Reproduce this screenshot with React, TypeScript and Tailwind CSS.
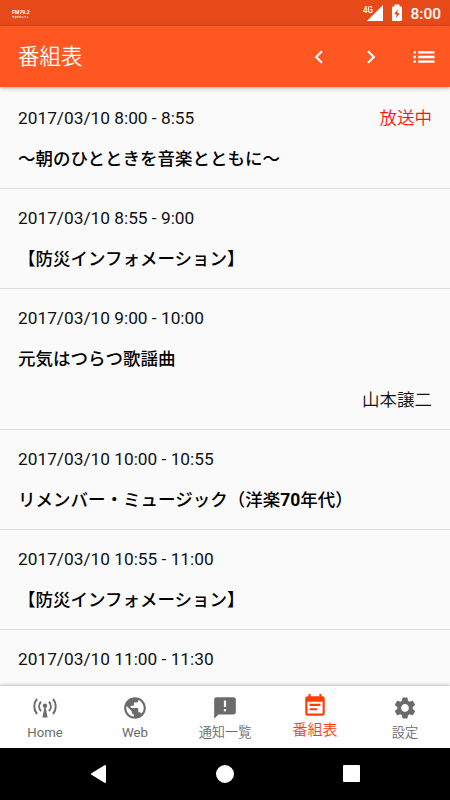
import { MdAnnouncement, MdChevronLeft, MdChevronRight, MdEventNote, MdList, MdPublic, MdSettings } from "react-icons/md";

const PROGRAMS = [
  { time: "2017/03/10 8:00 - 8:55", title: "～朝のひとときを音楽とともに～", onAir: true },
  { time: "2017/03/10 8:55 - 9:00", title: "【防災インフォメーション】" },
  { time: "2017/03/10 9:00 - 10:00", title: "元気はつらつ歌謡曲", host: "山本譲二" },
  { time: "2017/03/10 10:00 - 10:55", title: <>リメンバー・ミュージック（洋楽<b>70</b>年代）</> },
  { time: "2017/03/10 10:55 - 11:00", title: "【防災インフォメーション】" },
  { time: "2017/03/10 11:00 - 11:30", title: "" },
];

function AntennaIcon() {
  return (
    <svg width="26" height="26" viewBox="0 0 26 26" fill="none" stroke="currentColor" strokeWidth="2">
      <path d="M5 3.8C1.4 7.9 1.4 14.9 5 19M21 3.8c3.6 4.1 3.6 11.1 0 15.2" />
      <path d="M9 6.8c-2.5 2.7-2.5 6.6 0 9.3M17 6.8c2.5 2.7 2.5 6.6 0 9.3" />
      <circle cx="13" cy="10.8" r="2.2" fill="currentColor" stroke="none" />
      <path d="M12.4 12.5h1.2L15.6 22.5h-5.2z" fill="currentColor" stroke="none" />
    </svg>
  );
}

const TABS = [
  { label: "Home", icon: <AntennaIcon /> },
  { label: "Web", icon: <MdPublic size={26} /> },
  { label: "通知一覧", icon: <MdAnnouncement size={26} />, cjk: true },
  { label: "番組表", icon: <MdEventNote size={26} />, cjk: true, active: true },
  { label: "設定", icon: <MdSettings size={26} />, cjk: true },
];

function StatusBar() {
  return (
    <div className="flex h-[26px] shrink-0 items-center justify-between bg-[#e64a19] pl-2.5 pr-[9px] text-white">
      <svg width="40" height="26" viewBox="0 0 40 26" fill="#fff" fontWeight="700">
        <text x="2" y="14.3" fontSize="5.2">FM79.2</text>
        <text x="2" y="17.6" fontSize="2.4">やまがたシティ</text>
      </svg>
      <div className="flex items-center">
        <svg width="20" height="18" viewBox="0 0 20 18" fill="#fff">
          <text x="0" y="8.5" fontSize="9" fontWeight="500" textLength="10" lengthAdjust="spacingAndGlyphs">4G</text>
          <path d="M20 1v16H4z" />
        </svg>
        <svg className="ml-[9px]" width="10" height="18" viewBox="0 0 10 18">
          <path d="M2.5.5h5v2H9a1 1 0 0 1 1 1V16a1 1 0 0 1-1 1H1a1 1 0 0 1-1-1V3.5a1 1 0 0 1 1-1h1.5z" fill="#fff" />
          <path d="M6.2 5 2.3 9.8l2.5 1L3.6 14.5l4.1-5-2.6-1z" fill="#e64a19" />
        </svg>
        <span className="ml-2 pt-[3px] text-[15.5px] font-medium leading-none">8:00</span>
      </div>
    </div>
  );
}

export default function App() {
  return (
    <div className="flex h-[800px] w-[450px] flex-col overflow-hidden bg-[#fafafa] font-['Roboto','Noto_Sans_CJK_JP',sans-serif]">
      <StatusBar />
      <header className="z-10 flex h-[61px] shrink-0 items-center bg-[#ff5722] pl-[18px] pr-3 text-white shadow-[0_1px_4px_rgba(0,0,0,0.35)]">
        <h1 className="flex-1 pt-px text-[21.5px] font-[350] leading-none">番組表</h1>
        <MdChevronLeft size={26} className="mr-[26px]" />
        <MdChevronRight size={26} className="mr-[26px]" />
        <MdList size={28} />
      </header>

      <main className="min-h-0 flex-1 overflow-hidden pt-0.5 text-[17.5px] leading-5 text-[#111]">
        {PROGRAMS.map((p) => (
          <div key={p.time} className="border-b border-[#dcdcdc] px-[18px] pb-[19px] pt-[19px]">
            <div className="flex h-5 justify-between">
              <span className="text-[17.3px]">{p.time}</span>
              {p.onAir && <span className="font-[350] text-[#ff1508]">放送中</span>}
            </div>
            <div className="mt-[21px] h-5 whitespace-nowrap font-medium text-black">{p.title}</div>
            {p.host && <div className="mt-[21px] h-5 text-right font-[350]">{p.host}</div>}
          </div>
        ))}
      </main>

      <nav className="z-10 grid h-[62px] shrink-0 grid-cols-5 bg-white shadow-[0_-1px_3px_rgba(0,0,0,0.25)]">
        {TABS.map((t) => (
          <button
            key={t.label}
            className={`flex flex-col items-center ${t.active ? "pt-[7px] text-[15px] text-[#ff3d0a]" : "pt-[9px] text-[13.2px] text-[#6b6b6b]"}`}
          >
            {t.icon}
            <span className={`${t.cjk ? "font-[350]" : "font-normal"} ${t.active ? "leading-[22px]" : "leading-[24px]"}`}>{t.label}</span>
          </button>
        ))}
      </nav>

      <div className="flex h-[52px] shrink-0 items-center justify-center bg-black">
        <svg width="270" height="20" viewBox="0 0 270 20" fill="#fff" stroke="#fff" strokeWidth="2" strokeLinejoin="round">
          <path d="M2 10 15 2v16z" />
          <circle cx="135" cy="10" r="8" />
          <path d="M254 2h15v15h-15z" />
        </svg>
      </div>
    </div>
  );
}
